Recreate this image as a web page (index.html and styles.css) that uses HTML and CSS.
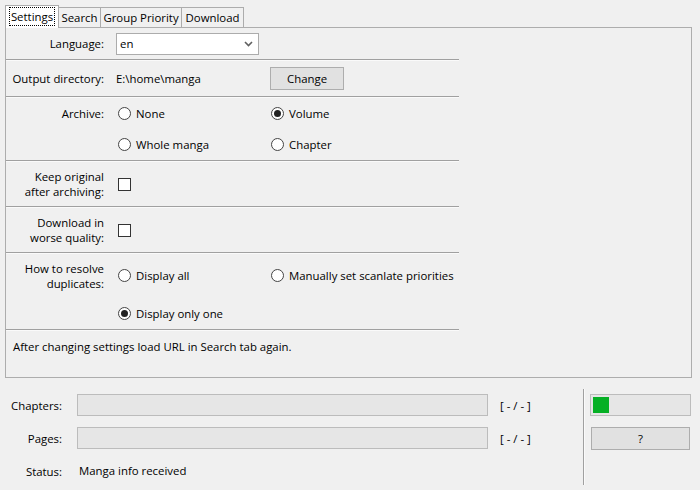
FILE: index.html
```html
<!DOCTYPE html>
<html>
<head>
<meta charset="utf-8">
<link rel="stylesheet" href="styles.css">
</head>
<body>
<div class="app">
  <div class="tabbar">
    <div class="tab active w-settings"><span class="focus">Settings</span></div>
    <div class="tab w-search">Search</div>
    <div class="tab w-group">Group Priority</div>
    <div class="tab w-download">Download</div>
  </div>
  <div class="pane">
    <div class="form">
      <div class="row r-lang">
        <div class="label">Language:</div>
        <div class="field">
          <div class="select"><span>en</span>
            <svg class="chev" width="9" height="6" viewBox="0 0 9 6"><polyline points="1,1 4.5,4.5 8,1" fill="none" stroke="#606060" stroke-width="1.6"/></svg>
          </div>
        </div>
      </div>
      <div class="sep"></div>
      <div class="row r-out">
        <div class="label">Output directory:</div>
        <div class="field">E:\home\manga</div>
        <div class="field2"><div class="button change">Change</div></div>
      </div>
      <div class="sep"></div>
      <div class="row r-archive">
        <div class="label">Archive:</div>
        <div class="field"><span class="radio"></span>None</div>
        <div class="field2"><span class="radio checked"></span>Volume</div>
        <div class="field"><span class="radio"></span>Whole manga</div>
        <div class="field2"><span class="radio"></span>Chapter</div>
      </div>
      <div class="sep"></div>
      <div class="row r-check">
        <div class="label">Keep original<br>after archiving:</div>
        <div class="field"><span class="checkbox"></span></div>
      </div>
      <div class="sep"></div>
      <div class="row r-check">
        <div class="label">Download in<br>worse quality:</div>
        <div class="field"><span class="checkbox"></span></div>
      </div>
      <div class="sep"></div>
      <div class="row r-dup">
        <div class="label">How to resolve<br>duplicates:</div>
        <div class="field"><span class="radio"></span>Display all</div>
        <div class="field2"><span class="radio"></span>Manually set scanlate priorities</div>
        <div class="field"><span class="radio checked"></span>Display only one</div>
      </div>
      <div class="sep"></div>
      <div class="note">After changing settings load URL in Search tab again.</div>
    </div>
  </div>
  <div class="bottom">
    <div class="progress-grid">
      <div class="blabel">Chapters:</div>
      <div class="bar"></div>
      <div class="count">[ - / - ]</div>
      <div class="blabel">Pages:</div>
      <div class="bar"></div>
      <div class="count">[ - / - ]</div>
      <div class="blabel">Status:</div>
      <div class="status">Manga info received</div>
    </div>
    <div class="vline"></div>
    <div class="side">
      <div class="busy"><div class="chunk"></div></div>
      <div class="button help">?</div>
    </div>
  </div>
</div>
</body>
</html>
```

FILE: styles.css
```css
html, body {
  margin: 0;
  padding: 0;
}
body {
  background: #f0f0f0;
  font-family: "Open Sans", "Noto Sans", sans-serif;
  font-size: 11.4px;
  color: #000;
  width: 700px;
  height: 490px;
  overflow: hidden;
}
.app {
  padding: 5px 8px 0 5px;
}
.tabbar {
  display: flex;
  align-items: flex-end;
  height: 23px;
  margin-bottom: -1px;
  position: relative;
  z-index: 2;
}
.tab {
  box-sizing: border-box;
  height: 20px;
  margin-bottom: 1px;
  border: 1px solid #acacac;
  border-bottom: none;
  background: #f0f0f0;
  display: flex;
  align-items: center;
  justify-content: center;
  line-height: 16px;
  margin-left: -1px;
  white-space: nowrap;
}
.tab.active {
  height: 23px;
  margin-bottom: 0;
  margin-left: 0;
  background: #ffffff;
  position: relative;
  z-index: 3;
  padding-bottom: 1px;
}
.focus {
  outline: 1px dotted #000;
  outline-offset: 0;
  padding: 0 1px;
  line-height: 17px;
}
.w-settings { width: 54px; }
.w-search { width: 43px; }
.w-group { width: 82px; }
.w-download { width: 63px; }

.pane {
  box-sizing: border-box;
  height: 351px;
  border: 1px solid #adadad;
  background: #f0f0f0;
}
.form {
  width: 453px;
}
.row {
  display: grid;
  grid-template-columns: 110px 154px 1fr;
  align-items: center;
}
.label {
  text-align: right;
  padding-right: 12px;
  line-height: 15px;
  grid-column: 1;
  white-space: nowrap;
}
.field {
  grid-column: 2;
  display: flex;
  align-items: center;
  white-space: nowrap;
}
.field2 {
  grid-column: 3;
  display: flex;
  align-items: center;
  white-space: nowrap;
}
.r-lang { height: 31px; }
.r-out { height: 35px; }
.r-archive { grid-template-rows: 31px 31px; }
.r-archive .label { grid-row: 1; }
.r-check { height: 44px; }
.r-dup { grid-template-rows: 43px 32px; }
.r-dup .label { grid-row: 1; }
.r-dup .field:last-child { grid-row: 2; }

.sep {
  height: 1px;
  background: #a0a0a0;
  border-bottom: 1px solid #fafafa;
}
.select {
  box-sizing: border-box;
  width: 143px;
  height: 22px;
  border: 1px solid #acacac;
  background: #fff;
  display: flex;
  align-items: center;
  justify-content: space-between;
  padding: 0 5px 0 3px;
}
.chev { display: block; }
.button {
  box-sizing: border-box;
  border: 1px solid #adadad;
  background: #e1e1e1;
  display: flex;
  align-items: center;
  justify-content: center;
}
.change {
  width: 74px;
  height: 23px;
}
.radio {
  box-sizing: border-box;
  width: 13px;
  height: 13px;
  border: 1px solid #444;
  border-radius: 50%;
  background: #fff;
  margin: 0 5px 0 2px;
  display: flex;
  align-items: center;
  justify-content: center;
  flex: none;
}
.field2 .radio { margin-left: 1px; }
.radio.checked::after {
  content: "";
  width: 7px;
  height: 7px;
  border-radius: 50%;
  background: #222;
}
.checkbox {
  box-sizing: border-box;
  width: 13px;
  height: 13px;
  border: 1px solid #333;
  background: #fff;
  margin-left: 2px;
}
.note {
  height: 32px;
  line-height: 32px;
  padding-left: 7px;
  white-space: nowrap;
}

.bottom {
  display: flex;
  margin-left: -5px;
  height: 112px;
}
.progress-grid {
  width: 583px;
  box-sizing: border-box;
  padding-top: 16px;
  display: grid;
  grid-template-columns: 62px 426px auto;
  grid-template-rows: 22px 22px 22px;
  column-gap: 0;
  row-gap: 11px;
  align-items: center;
  align-content: start;
}
.blabel {
  text-align: right;
}
.bar {
  box-sizing: border-box;
  height: 22px;
  margin-left: 15px;
  border: 1px solid #bcbcbc;
  background: #e6e6e6;
  width: 411px;
}
.count {
  padding-left: 12px;
  white-space: nowrap;
}
.status {
  grid-column: 2 / 4;
  padding-left: 17px;
  margin-top: -2px;
}
.vline {
  width: 1px;
  height: 96px;
  margin-top: 11px;
  background: #a0a0a0;
  border-right: 1px solid #fafafa;
}
.side {
  padding-top: 16px;
  margin-left: 5px;
}
.busy {
  box-sizing: border-box;
  width: 101px;
  height: 22px;
  border: 1px solid #bcbcbc;
  background: #e6e6e6;
  padding: 2px;
}
.chunk {
  width: 16px;
  height: 16px;
  background: #06b025;
}
.help {
  width: 99px;
  height: 23px;
  margin: 11px 0 0 1px;
}
```
